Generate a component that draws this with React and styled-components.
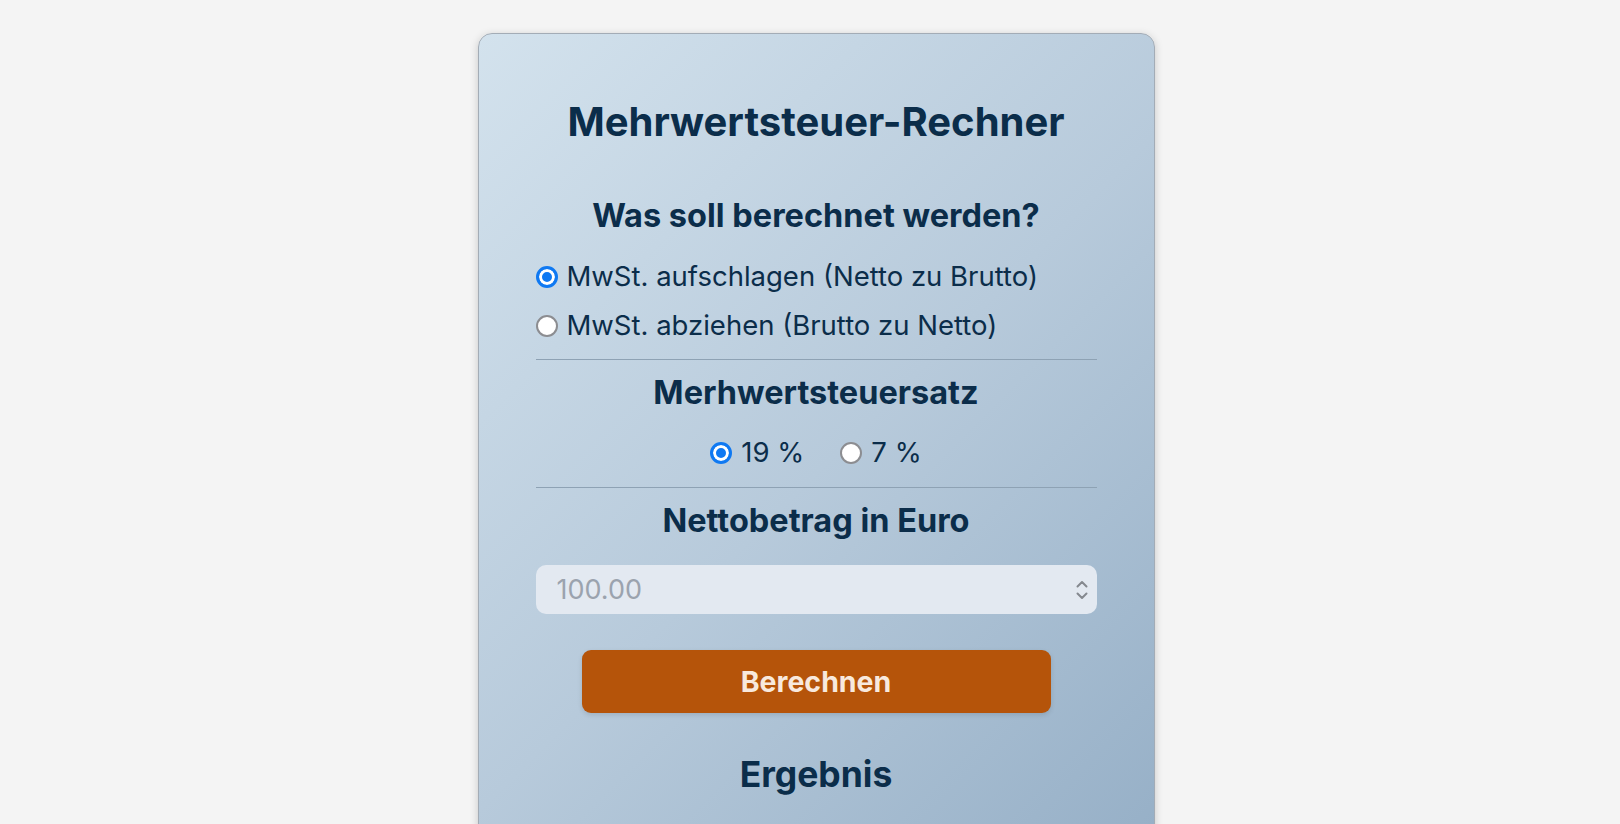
import React, { useState } from 'react';
import styled, { createGlobalStyle } from 'styled-components';

const GlobalStyle = createGlobalStyle`
  html, body {
    margin: 0;
    padding: 0;
    background: #f4f4f4;
    font-family: Inter, "Liberation Sans", sans-serif;
    color: #0b2d4a;
  }
`;

const Page = styled.div`
  display: flex;
  justify-content: center;
  padding: 33px 0 0 12px;
`;

const Card = styled.div`
  box-sizing: border-box;
  width: 677px;
  min-height: 880px;
  padding: 0 57px 40px;
  display: flex;
  flex-direction: column;
  border: 1px solid #a3acb6;
  border-radius: 14px;
  background: linear-gradient(135deg, #d3e2ed 0%, #b7cadb 50%, #93adc5 100%);
  box-shadow: 0 2px 8px rgba(0, 0, 0, 0.18);
`;

const Title = styled.h1`
  margin: 66px 0 0;
  font-size: 40px;
  line-height: 43px;
  font-weight: 700;
  text-align: center;
`;

const Heading = styled.h3`
  margin: ${(p) => p.$top}px 0 0;
  font-size: 32.5px;
  line-height: 34px;
  font-weight: 700;
  text-align: center;
`;

const OptionList = styled.div`
  display: flex;
  flex-direction: column;
  align-items: flex-start;
  gap: 18px;
  margin-top: 28px;
`;

const OptionRow = styled.div`
  display: flex;
  justify-content: center;
  gap: 36px;
  margin-top: 27px;
`;

const Option = styled.label`
  display: flex;
  align-items: center;
  gap: 9px;
  font-size: 27.5px;
  line-height: 31px;
  cursor: pointer;
`;

const Radio = styled.input.attrs({ type: 'radio' })`
  appearance: none;
  box-sizing: border-box;
  width: 22px;
  height: 22px;
  margin: 0;
  border-radius: 50%;
  border: 2.5px solid #8c8d91;
  background: #fff;
  flex-shrink: 0;

  &:checked {
    border: 3px solid #0f79f2;
    background: #0f79f2;
    box-shadow: inset 0 0 0 3px #fff;
  }
`;

const Divider = styled.hr`
  width: 100%;
  margin: ${(p) => p.$top}px 0 0;
  border: 0;
  border-top: 1px solid #8ea2b4;
`;

const InputWrap = styled.div`
  position: relative;
  margin-top: 27px;
`;

const AmountInput = styled.input`
  box-sizing: border-box;
  width: 100%;
  height: 49px;
  padding: 0 48px 0 21px;
  border: 0;
  border-radius: 10px;
  background: #e3e9f1;
  font-family: inherit;
  font-size: 27px;
  color: #0b2d4a;
  outline: none;

  &::placeholder {
    color: #9ba3ae;
  }
`;

const Spinner = styled.svg`
  position: absolute;
  right: 8px;
  top: 50%;
  transform: translateY(-50%);
  color: #85898f;
`;

const Button = styled.button`
  align-self: center;
  width: 469px;
  height: 63px;
  margin-top: 36px;
  border: 0;
  border-radius: 9px;
  background: #b5540a;
  color: #f8e9dd;
  font-family: inherit;
  font-size: 28.5px;
  font-weight: 700;
  box-shadow: 0 2px 5px rgba(0, 0, 0, 0.12);
  cursor: pointer;
`;

const ResultTitle = styled.h2`
  margin: 43px 0 0;
  font-size: 35.5px;
  line-height: 37px;
  font-weight: 700;
  text-align: center;
`;

export default function App() {
  const [mode, setMode] = useState('add');
  const [rate, setRate] = useState('19');
  const [amount, setAmount] = useState('');

  return (
    <>
      <GlobalStyle />
      <Page>
        <Card>
          <Title>Mehrwertsteuer-Rechner</Title>

          <Heading $top={56}>Was soll berechnet werden?</Heading>
          <OptionList>
            <Option>
              <Radio name="mode" checked={mode === 'add'} onChange={() => setMode('add')} />
              MwSt. aufschlagen (Netto zu Brutto)
            </Option>
            <Option>
              <Radio name="mode" checked={mode === 'sub'} onChange={() => setMode('sub')} />
              MwSt. abziehen (Brutto zu Netto)
            </Option>
          </OptionList>

          <Divider $top={18} />
          <Heading $top={16}>Merhwertsteuersatz</Heading>
          <OptionRow>
            <Option>
              <Radio name="rate" checked={rate === '19'} onChange={() => setRate('19')} />
              19 %
            </Option>
            <Option>
              <Radio name="rate" checked={rate === '7'} onChange={() => setRate('7')} />
              7 %
            </Option>
          </OptionRow>

          <Divider $top={19} />
          <Heading $top={16}>Nettobetrag in Euro</Heading>
          <InputWrap>
            <AmountInput
              type="text"
              inputMode="decimal"
              placeholder="100.00"
              value={amount}
              onChange={(e) => setAmount(e.target.value)}
            />
            <Spinner width="14" height="26" viewBox="0 0 14 26" fill="none" stroke="currentColor" strokeWidth="2" strokeLinecap="round" strokeLinejoin="round">
              <polyline points="2.5,9.5 7,5 11.5,9.5" />
              <polyline points="2.5,16.5 7,21 11.5,16.5" />
            </Spinner>
          </InputWrap>

          <Button type="button">Berechnen</Button>

          <ResultTitle>Ergebnis</ResultTitle>
        </Card>
      </Page>
    </>
  );
}
